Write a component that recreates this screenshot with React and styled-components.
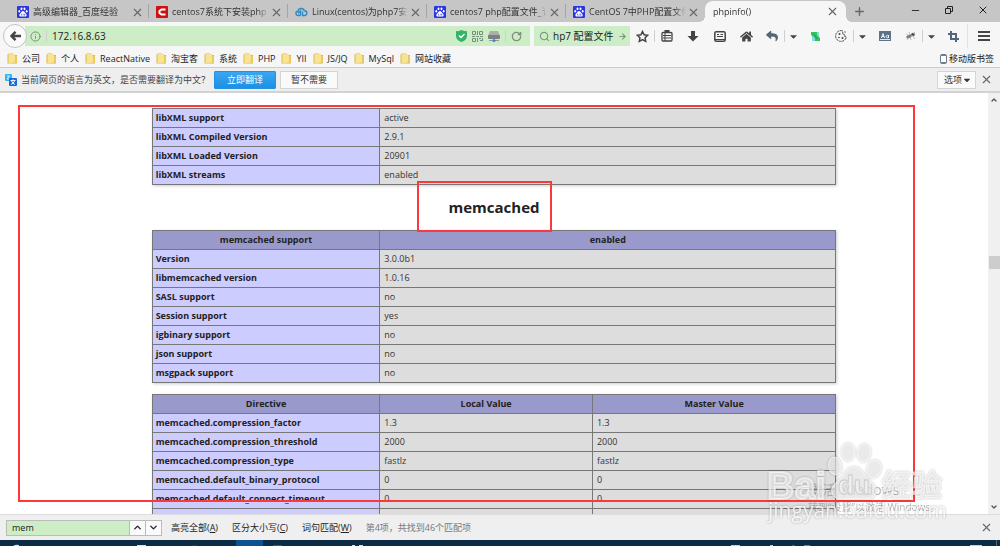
import React from 'react';
import styled, { createGlobalStyle, css } from 'styled-components';
import { ArrowRight, Info, Minus, Plus, RotateCw, Search, X, ChevronUp, ChevronDown } from 'lucide-react';
import { FaCaretDown, FaHome, FaReply } from 'react-icons/fa';

const GlobalStyle = createGlobalStyle`
  * {
    box-sizing: border-box;
  }

  body {
    margin: 0;
    background: #fff;
    color: #222;
    font-family: 'Open Sans', 'Noto Sans CJK SC', sans-serif;
    font-size: 9px;
    line-height: 12px;
  }

  button,
  input {
    margin: 0;
    padding: 0;
    border: 0;
    background: none;
    color: inherit;
    font: inherit;
  }

  svg {
    display: block;
    flex: none;
  }
`;

const Browser = styled.div`
  height: 100vh;
  display: flex;
  flex-direction: column;
  overflow: hidden;
`;

/* ---------- tabs ---------- */

const TabStrip = styled.header`
  flex: none;
  height: 22px;
  display: flex;
  padding-left: 10px;
  background: #c6c6c6;
`;

const Tab = styled.div`
  width: 139px;
  height: 22px;
  display: flex;
  align-items: center;
  gap: 4px;
  padding: 2px 5px 0 7px;
  position: relative;
  color: #333;

  ${({ $divider }) =>
    $divider &&
    css`
      background: linear-gradient(#a4a4a4, #a4a4a4) right 4px / 1px 14px no-repeat;
    `}

  ${({ $active }) =>
    $active &&
    css`
      width: 141px;
      height: 21px;
      margin: 1px 0 0;
      padding: 0 7px 0 8px;
      border-radius: 8px 8px 0 0;
      background: #f6f6f6;

      &::before,
      &::after {
        content: '';
        position: absolute;
        bottom: 0;
        width: 6px;
        height: 6px;
      }

      &::before {
        left: -6px;
        background: radial-gradient(circle at 0 0, transparent 6px, #f6f6f6 6px);
      }

      &::after {
        right: -6px;
        background: radial-gradient(circle at 100% 0, transparent 6px, #f6f6f6 6px);
      }
    `}
`;

const TabTitle = styled.span`
  flex: 1;
  min-width: 0;
  margin-right: -3px;
  overflow: hidden;
  white-space: nowrap;
  mask-image: linear-gradient(to right, #000 88%, transparent);
`;

const IconButton = styled.button`
  display: flex;
  align-items: center;
  justify-content: center;
  color: ${({ $color }) => $color || '#666'};
`;

const NewTab = styled(IconButton)`
  width: 26px;
`;

const WindowButtons = styled.div`
  margin-left: auto;
  display: flex;
  height: 20px;
`;

const WindowButton = styled(IconButton)`
  width: 34px;
`;

/* ---------- toolbar ---------- */

const Toolbar = styled.div`
  flex: none;
  height: 28px;
  display: flex;
  align-items: center;
  background: #f6f6f6;
`;

const BackButton = styled(IconButton)`
  width: 24px;
  height: 24px;
  margin: 0 -2px 0 3px;
  position: relative;
  border: 1px solid #c3c3c3;
  border-radius: 50%;
  background: #fafafa;
`;

const UrlBar = styled.div`
  flex: 1;
  height: 20px;
  display: flex;
  align-items: center;
  gap: 5px;
  padding: 0 8px 0 5px;
  background: #cdedc7;
`;

const UrlInput = styled.input`
  flex: 1;
  min-width: 0;
  font-size: 10px;
  outline: none;
`;

const SearchBox = styled.div`
  width: 96px;
  height: 20px;
  display: flex;
  align-items: center;
  gap: 3px;
  margin-left: 4px;
  padding: 0 3px 0 5px;
  background: #cdedc7;
  color: #7c9a7c;
`;

const SearchInput = styled.input`
  flex: 1;
  min-width: 0;
  color: #222;
  font-size: 10px;
  outline: none;
`;

const Divider = styled.span`
  width: 1px;
  height: ${({ $tall }) => ($tall ? '24px' : '12px')};
  background: ${({ $tall }) => ($tall ? '#e2e2e2' : '#cfcfcf')};
`;

const toolWidths = { wide: '32px', normal: '27px', narrow: '24px', caret: '17px' };

const ToolButton = styled(IconButton)`
  width: ${({ $size }) => toolWidths[$size || 'normal']};
  height: 24px;
`;

/* ---------- bookmarks and translate bar ---------- */

const Bookmarks = styled.nav`
  flex: none;
  height: 18px;
  display: flex;
  align-items: center;
  gap: 6px;
  padding: 0 6px 0 7px;
  border-bottom: 1px solid #cbcbcb;
  background: #f6f6f6;
`;

const Bookmark = styled.a`
  display: flex;
  align-items: center;
  gap: 4px;
  color: #222;
  text-decoration: none;
  white-space: nowrap;
`;

const MobileBookmarks = styled(Bookmark)`
  margin-left: auto;
  gap: 2px;
`;

const TranslateBar = styled.div`
  flex: none;
  height: 25px;
  display: flex;
  align-items: center;
  gap: 4px;
  padding: 0 7px 0 5px;
  border-bottom: 2px solid #d2d2d2;
  background: #eee;
`;

const TranslateText = styled.span`
  color: #444;
  white-space: nowrap;
`;

const BarButton = styled.button`
  height: 18px;
  padding: 0 10px;
  border: 1px solid #d5d5d5;
  background: #fafafa;
  color: #333;
  white-space: nowrap;

  ${({ $primary }) =>
    $primary &&
    css`
      padding: 0 12px;
      border-color: #2492e0;
      border-radius: 1px;
      background: linear-gradient(#3ba6f0, #1b90e6);
      color: #fff;
    `}
`;

const OptionsButton = styled(BarButton)`
  display: flex;
  align-items: center;
  margin-left: auto;
  padding: 0 3px 0 6px;
`;

/* ---------- page ---------- */

const Viewport = styled.main`
  flex: 1;
  min-height: 0;
  display: flex;
  position: relative;
`;

const Page = styled.div`
  flex: 1;
  overflow: hidden;
  padding-top: 15px;
`;

const InfoTable = styled.table`
  width: 69.3%;
  margin: 0 auto 11px;
  table-layout: fixed;
  border-collapse: collapse;
  box-shadow: 1px 1px 3px #ccc;
`;

const cell = css`
  height: 19px;
  padding: 0 4px;
  border: 1px solid #777;
  text-align: left;
`;

const HeadCell = styled.th`
  ${cell}
  background: #9999cc;
  text-align: center;
`;

const NameCell = styled.th`
  ${cell}
  padding-left: 3px;
  background: #ccccff;
`;

const ValueCell = styled.td`
  ${cell}
  background: #ddd;
  color: #333;
`;

const ModuleTitle = styled.h2`
  margin: 0;
  padding: 1px 0 13px;
  font-size: 15px;
  line-height: 20px;
  text-align: center;
`;

const Scrollbar = styled.div`
  width: 12px;
  display: flex;
  flex-direction: column;
  justify-content: space-between;
  align-items: center;
  padding: 3px 0;
  background: #f0f0f0;
  color: #555;
`;

const Thumb = styled.div`
  width: 11px;
  height: 13px;
  margin-bottom: 82px;
  background: #cdcdcd;
`;

const PageFrame = styled.div`
  position: absolute;
  top: 12px;
  right: 85px;
  bottom: 12px;
  left: 18px;
  border: 2px solid #fa3a3a;
  pointer-events: none;
`;

const TitleFrame = styled.div`
  position: absolute;
  top: 88px;
  left: calc(50% - 83px);
  width: 135px;
  height: 51px;
  border: 2px solid #fa3a3a;
  pointer-events: none;
`;

const Activation = styled.div`
  position: absolute;
  right: 48px;
  bottom: 0;
  width: 144px;
  color: #999;
  opacity: 0.7;
  font-size: 10px;
  line-height: 14px;
  white-space: nowrap;
`;

const ActivationTitle = styled.div`
  font-size: 14px;
  line-height: 20px;
`;

const Watermark = styled.svg`
  position: absolute;
  right: 46px;
  bottom: -10px;
  z-index: 2;
  filter: drop-shadow(0 0 1px rgba(0, 0, 0, 0.35));
  pointer-events: none;
`;

/* ---------- find bar and taskbar ---------- */

const FindBar = styled.footer`
  flex: none;
  height: 26px;
  display: flex;
  align-items: center;
  gap: 14px;
  padding: 0 7px 0 6px;
  border-top: 1px solid #ddd;
  background: #efefef;
`;

const FindField = styled.div`
  display: flex;
  height: 16px;
  margin-right: -5px;
  border: 1px solid #bbb;
`;

const FindInput = styled.input`
  width: 122px;
  padding-left: 5px;
  background: #cdedc7;
  outline: none;
`;

const FindStep = styled(IconButton)`
  width: 16px;
  border-left: 1px solid #bbb;
  background: #fafafa;
`;

const FindOption = styled.button`
  white-space: nowrap;
`;

const FindStatus = styled.span`
  color: #777;
`;

const FindClose = styled(IconButton)`
  margin-left: auto;
`;

const Taskbar = styled.div`
  flex: none;
  height: 6px;
  display: flex;
  justify-content: space-between;
  background: #0c2c45;
`;

/* ---------- drawings ---------- */

const Paw = ({ size = 12 }) => (
  <svg width={size} height={size} viewBox="0 0 12 12">
    <rect width="12" height="12" rx="1" fill="#2b36e0" />
    <g fill="#fff">
      <ellipse cx="4.5" cy="2.8" rx="1" ry="1.4" />
      <ellipse cx="7.5" cy="2.8" rx="1" ry="1.4" />
      <ellipse cx="2.3" cy="5.2" rx="0.9" ry="1.3" />
      <ellipse cx="9.7" cy="5.2" rx="0.9" ry="1.3" />
      <path d="M6 4.9c1.2 0 1.5 1.2 2.3 2 .9.8 1.5 1.5 1.3 2.5-.3 1.3-1.8 1.2-3.6 1.2S2.7 10.7 2.4 9.4c-.2-1 .4-1.7 1.3-2.5.8-.8 1.1-2 2.3-2z" />
    </g>
    <path d="M4.5 7.7v1.5h1M6.8 7.7v1.5h1V7.7" fill="none" stroke="#2b36e0" strokeWidth="0.6" />
  </svg>
);

const RedC = () => (
  <svg width="12" height="12" viewBox="0 0 12 12">
    <rect width="12" height="12" rx="1" fill="#cf1010" />
    <path d="M9.5 3.5H5.5L3.5 5v2l2 1.5h4" fill="none" stroke="#fff" strokeWidth="2" />
  </svg>
);

const Cloud = () => (
  <svg width="13" height="12" viewBox="0 0 13 12" fill="none" stroke="#2d8cc8" strokeWidth="1.4">
    <path d="M5.5 9.5H3.3C.2 9.5.2 5.5 3 5.3 3.3 1.8 8.5 1.5 9.3 4.8c3.4.2 3.4 4.7.2 4.7H7.5V5.5" />
    <path d="M3 7.5 5.5 5v4.5" />
  </svg>
);

const Restore = () => (
  <svg width="8" height="8" viewBox="0 0 8 8" fill="none" stroke="#222">
    <path d="M.5 2.5h5v5h-5zM2.5 2.5v-2h5v5h-2" />
  </svg>
);

const BackArrow = () => (
  <svg width="11" height="10" viewBox="0 0 11 10" fill="none" stroke="#444" strokeWidth="2.4">
    <path d="M5.5.8 1.5 5l4 4.2M1.5 5H11" />
  </svg>
);

const DownArrow = () => (
  <svg width="12" height="12" viewBox="0 0 12 12" fill="#444">
    <path d="M4 1h4v5h3.500L6 11.500.500 6H4z" />
  </svg>
);

const Shield = () => (
  <svg width="11" height="12" viewBox="0 0 11 12">
    <path d="M0 1q3 .5 5.500-1Q8 1.500 11 1v5q0 4-5.500 6Q0 10 0 6z" fill="#35b36b" />
    <path d="M3 5.5 5 7.5l3.500-3.500" fill="none" stroke="#fff" strokeWidth="1.3" />
  </svg>
);

const QrCode = () => (
  <svg width="11" height="11" viewBox="0 0 11 11" fill="none" stroke="#76917a">
    <path d="M.5.5h3v3h-3zM7.5.5h3v3h-3zM.5 7.5h3v3h-3zM5.5 0v4M0 5.5h3M4 5.5h3M8 5.5h3M5.5 7v4M7 7.5h2M8 9.5h3M10.5 7v2" />
  </svg>
);

const Drive = () => (
  <svg width="12" height="12" viewBox="0 0 12 12">
    <path d="M2 1h8l2 5H0z" fill="#a9b0aa" />
    <rect y="5" width="12" height="4" rx="1" fill="#7a807b" />
    <path d="M1 10.5h10" stroke="#999" />
    <circle cx="6" cy="10.5" r="1.5" fill="#3f7fe0" />
  </svg>
);

const StarOutline = () => (
  <svg width="13" height="13" viewBox="0 0 13 13" fill="none" stroke="#444" strokeWidth="1.5">
    <path d="m6.5 1.5 1.6 3.3 3.6.5-2.6 2.5.6 3.6-3.2-1.7-3.2 1.7.6-3.6L1.3 5.3l3.6-.5z" />
  </svg>
);

const Clipboard = () => (
  <svg width="12" height="12" viewBox="0 0 12 12" fill="none" stroke="#444">
    <rect x="1" y="2.5" width="10" height="8.5" rx="1" strokeWidth="1.3" />
    <path d="M3.5 1h5" strokeWidth="2" />
    <path d="M4 3v8M2 5.5h8M2 8h8" />
  </svg>
);

const Reader = () => (
  <svg width="12" height="11" viewBox="0 0 12 11" fill="none" stroke="#444">
    <rect x=".8" y=".8" width="10.4" height="9.4" rx="1.5" strokeWidth="1.5" />
    <path d="M3 3.500h2M6.500 3.500h2.500M3 5.500h6M1 8.500h10" />
  </svg>
);

const Sync = () => (
  <svg width="9" height="11" viewBox="0 0 9 11">
    <path d="M1 1h7v9H1z" fill="#7fdfe6" />
    <path d="M0 1h6v3l3 3v3H4V7L0 4z" fill="#35c05b" />
    <path d="M3 3 6 8" stroke="#22a055" />
  </svg>
);

const Cookie = () => (
  <svg width="12" height="12" viewBox="0 0 12 12">
    <path d="M7.5.8A5.4 5.4 0 1 0 11.3 7L9.5 6.5 10 5 8 4.5z" fill="none" stroke="#555" strokeDasharray="2.5 .6" />
    <g fill="#444">
      <circle cx="4.5" cy="4" r="1" />
      <circle cx="4" cy="7.5" r=".8" />
      <circle cx="7.5" cy="8" r="1" />
      <circle cx="10" cy="2" r=".7" />
    </g>
  </svg>
);

const Dictionary = () => (
  <svg width="12" height="10" viewBox="0 0 12 10">
    <rect width="12" height="10" fill="#5f7388" />
    <path d="M1 8.5h10" stroke="#dfe5ea" />
    <path d="M2.5 7 4 2.5 5.5 7M3 5.5h2M9.5 4v3M9.5 5.5a1.2 1.2 0 1 0 0 .1" fill="none" stroke="#fff" strokeWidth=".9" />
  </svg>
);

const Bug = () => (
  <svg width="11" height="10" viewBox="0 0 11 10">
    <ellipse cx="4" cy="5.5" rx="2.8" ry="1.7" fill="#777" transform="rotate(-20 4 5.5)" />
    <circle cx="8" cy="3.5" r="1.8" fill="#555" />
    <path d="M1 2.5 4 5 2 9M5 5l1 4M7 4l3 4M5 4 4 1M8 3l2-2" fill="none" stroke="#999" strokeWidth=".6" />
  </svg>
);

const CropIcon = () => (
  <svg width="11" height="11" viewBox="0 0 11 11" fill="none" stroke="#536577" strokeWidth="2">
    <path d="M3 0v8h8M0 3h8v8" />
  </svg>
);

const MenuIcon = () => (
  <svg width="12" height="10" viewBox="0 0 12 10" fill="none" stroke="#444" strokeWidth="2">
    <path d="M0 1h12M0 5h12M0 9h12" />
  </svg>
);

const Folder = () => (
  <svg width="11" height="11" viewBox="0 0 11 11">
    <path d="M.5 1.5 2 .5h4l1 1.500h3v8.500H.5z" fill="#dcb84e" />
    <path d="M1.5 1h6.500v8.500l-6.500 1z" fill="#f7e394" />
    <path d="M8 3h2v7H8z" fill="#ecc860" />
  </svg>
);

const Phone = () => (
  <svg width="7" height="10" viewBox="0 0 7 10">
    <rect x=".5" y=".5" width="6" height="9" rx="1" fill="#fff" stroke="#6b7c8c" />
    <path d="M1 1.5h5M1 8.5h5" stroke="#6b7c8c" />
  </svg>
);

const Translate = () => (
  <svg width="12" height="12" viewBox="0 0 12 12">
    <rect width="7" height="7" rx="1" fill="#36b4ec" />
    <path d="M2 2h2.500L2 5h3" fill="none" stroke="#fff" strokeWidth=".8" />
    <rect x="4" y="4" width="8" height="8" rx="1" fill="#1769e0" />
    <path d="M5.5 6.5h5M8 5.3v1.2M6.5 7q1 2.500 3.500 3.500M9.500 7q-1 2.500-3.500 3.500" fill="none" stroke="#fff" strokeWidth=".9" />
  </svg>
);

const BaiduWatermark = () => (
  <Watermark width="188" height="90" viewBox="0 0 188 90">
    <g fill="#fff" fillOpacity="0.6" stroke="#fff" strokeOpacity="0.6">
      <ellipse cx="82" cy="18" rx="6.5" ry="9" />
      <ellipse cx="98" cy="19" rx="6.5" ry="9" transform="rotate(10 98 19)" />
      <ellipse cx="69" cy="32" rx="6.5" ry="9" transform="rotate(-12 69 32)" />
      <ellipse cx="108" cy="35" rx="7" ry="9" transform="rotate(20 108 35)" />
      <path d="M88 33c8 0 9 7 14 12 5 4 10 9 8 14-2 8-11 6-22 6s-20 2-22-6c-2-5 3-10 8-14 5-5 6-12 14-12z" />
      <text x="1" y="65" fontSize="38" fontWeight="700" strokeWidth="2" fontFamily="Liberation Sans, sans-serif">Bai</text>
      <text x="116" y="62" fontSize="30" fontWeight="700" fontFamily="Noto Sans CJK SC, sans-serif">经验</text>
      <text x="2" y="84" fontSize="21" strokeWidth="0" fillOpacity="0.8" fontFamily="Open Sans, sans-serif">jingyan.baidu.com</text>
    </g>
    <text x="72" y="60" fontSize="26" fontWeight="700" fontFamily="Liberation Sans, sans-serif" fill="#eee" stroke="#ccc" strokeWidth="0.8">du</text>
  </Watermark>
);

const TaskIcons = () => (
  <svg width="380" height="6" viewBox="0 0 380 6">
    <path d="M236 0h27v6h-27z" fill="#0b5292" />
    <path d="M13 6q3-2 6-1v1zM137 5h9v1h-9zM352 5h3v1h-3zM359 5h4v1h-4z" fill="#d9e2e8" />
    <path d="M192 5h5v1h-5z" fill="#5c2630" />
    <path d="M273 5h9v1h-9z" fill="#0d7382" />
  </svg>
);

const TrayIcons = () => (
  <svg width="272" height="6" viewBox="0 0 272 6">
    <path d="M3 5h9v1H3zM42 5h3v1h-3zM242 5h12v1h-12z" fill="#c5d0d8" />
    <path d="M20 5h11v1H20z" fill="#1a1b9c" />
    <path d="M64 5h3v1h-3z" fill="#b33" />
    <path d="M76 5h6v1h-6z" fill="#6c9b37" />
    <path d="M268.5 0v6" stroke="#50687a" />
  </svg>
);

/* ---------- content ---------- */

const tabs = [
  { title: '高级编辑器_百度经验', icon: <Paw /> },
  { title: 'centos7系统下安装php', icon: <RedC /> },
  { title: 'Linux(centos)为php7安', icon: <Cloud /> },
  { title: 'centos7 php配置文件_讠', icon: <Paw /> },
  { title: 'CentOS 7中PHP配置文件', icon: <Paw /> },
];

const bookmarks = ['公司', '个人', 'ReactNative', '淘宝客', '系统', 'PHP', 'YII', 'JS/JQ', 'MySql', '网站收藏'];

const libxml = [
  ['libXML support', 'active'],
  ['libXML Compiled Version', '2.9.1'],
  ['libXML Loaded Version', '20901'],
  ['libXML streams', 'enabled'],
];

const memcached = [
  ['Version', '3.0.0b1'],
  ['libmemcached version', '1.0.16'],
  ['SASL support', 'no'],
  ['Session support', 'yes'],
  ['igbinary support', 'no'],
  ['json support', 'no'],
  ['msgpack support', 'no'],
];

const directives = [
  ['memcached.compression_factor', '1.3', '1.3'],
  ['memcached.compression_threshold', '2000', '2000'],
  ['memcached.compression_type', 'fastlz', 'fastlz'],
  ['memcached.default_binary_protocol', '0', '0'],
  ['memcached.default_connect_timeout', '0', '0'],
  ['', '', ''],
];

const PhpTable = ({ head, rows, widths }) => (
  <InfoTable>
    <colgroup>
      {widths.map((width, i) => (
        <col key={i} width={width} />
      ))}
    </colgroup>
    {head && (
      <thead>
        <tr>
          {head.map((title) => (
            <HeadCell key={title} scope="col">{title}</HeadCell>
          ))}
        </tr>
      </thead>
    )}
    <tbody>
      {rows.map(([name, ...values]) => (
        <tr key={name}>
          <NameCell scope="row">{name}</NameCell>
          {values.map((value, i) => (
            <ValueCell key={i}>{value}</ValueCell>
          ))}
        </tr>
      ))}
    </tbody>
  </InfoTable>
);

const CloseIcon = () => <X size={13} strokeWidth={2} />;

const App = () => (
  <Browser>
    <GlobalStyle />
    <TabStrip>
      {tabs.map((tab, i) => (
        <Tab key={tab.title} $divider={i < tabs.length - 1}>
          {tab.icon}
          <TabTitle>{tab.title}</TabTitle>
          <IconButton aria-label="关闭标签页"><CloseIcon /></IconButton>
        </Tab>
      ))}
      <Tab $active>
        <TabTitle>phpinfo()</TabTitle>
        <IconButton aria-label="关闭标签页"><CloseIcon /></IconButton>
      </Tab>
      <NewTab aria-label="新标签页"><Plus size={13} strokeWidth={2.5} /></NewTab>
      <WindowButtons>
        <WindowButton aria-label="最小化" $color="#222"><Minus size={11} /></WindowButton>
        <WindowButton aria-label="还原"><Restore /></WindowButton>
        <WindowButton aria-label="关闭" $color="#222"><X size={12} /></WindowButton>
      </WindowButtons>
    </TabStrip>

    <Toolbar>
      <BackButton aria-label="后退"><BackArrow /></BackButton>
      <UrlBar>
        <Info size={11} color="#6f8a70" />
        <Divider />
        <UrlInput aria-label="地址" defaultValue="172.16.8.63" />
        <Shield />
        <QrCode />
        <Drive />
        <Divider />
        <IconButton aria-label="刷新" $color="#7c8f7c"><RotateCw size={11} strokeWidth={3} /></IconButton>
      </UrlBar>
      <SearchBox>
        <Search size={11} strokeWidth={2.5} />
        <SearchInput aria-label="搜索" defaultValue="hp7 配置文件" />
        <ArrowRight size={9} strokeWidth={3} />
      </SearchBox>
      <ToolButton $size="narrow" aria-label="收藏"><StarOutline /></ToolButton>
      <Divider />
      <ToolButton $size="narrow" aria-label="书签"><Clipboard /></ToolButton>
      <ToolButton aria-label="下载"><DownArrow /></ToolButton>
      <ToolButton aria-label="阅读"><Reader /></ToolButton>
      <ToolButton aria-label="主页" $color="#444"><FaHome size={13} /></ToolButton>
      <ToolButton $size="narrow" aria-label="撤销" $color="#536577"><FaReply size={12} /></ToolButton>
      <Divider />
      <ToolButton $size="caret" aria-label="撤销列表" $color="#444"><FaCaretDown size={11} /></ToolButton>
      <ToolButton aria-label="同步"><Sync /></ToolButton>
      <ToolButton $size="narrow" aria-label="Cookie"><Cookie /></ToolButton>
      <Divider />
      <ToolButton $size="caret" aria-label="Cookie 列表" $color="#444"><FaCaretDown size={11} /></ToolButton>
      <ToolButton aria-label="词典"><Dictionary /></ToolButton>
      <ToolButton $size="narrow" aria-label="调试"><Bug /></ToolButton>
      <Divider />
      <ToolButton $size="caret" aria-label="调试列表" $color="#444"><FaCaretDown size={11} /></ToolButton>
      <ToolButton aria-label="截图"><CropIcon /></ToolButton>
      <Divider $tall />
      <ToolButton $size="wide" aria-label="菜单"><MenuIcon /></ToolButton>
    </Toolbar>

    <Bookmarks>
      {bookmarks.map((name) => (
        <Bookmark key={name} href="#"><Folder />{name}</Bookmark>
      ))}
      <MobileBookmarks href="#"><Phone />移动版书签</MobileBookmarks>
    </Bookmarks>

    <TranslateBar>
      <Translate />
      <TranslateText>当前网页的语言为英文，是否需要翻译为中文？</TranslateText>
      <BarButton $primary>立即翻译</BarButton>
      <BarButton>暂不需要</BarButton>
      <OptionsButton>选项<FaCaretDown size={10} /></OptionsButton>
      <IconButton aria-label="关闭"><CloseIcon /></IconButton>
    </TranslateBar>

    <Viewport>
      <Page>
        <PhpTable rows={libxml} widths={['33.3%', '66.7%']} />
        <ModuleTitle>memcached</ModuleTitle>
        <PhpTable head={['memcached support', 'enabled']} rows={memcached} widths={['33.3%', '66.7%']} />
        <PhpTable
          head={['Directive', 'Local Value', 'Master Value']}
          rows={directives}
          widths={['33.3%', '31.1%', '35.6%']}
        />
      </Page>
      <Scrollbar>
        <ChevronUp size={8} strokeWidth={4} />
        <Thumb />
        <ChevronDown size={8} strokeWidth={4} />
      </Scrollbar>
      <Activation>
        <ActivationTitle>激活 Windows</ActivationTitle>
        转到“设置”以激活 Windows。
      </Activation>
      <PageFrame />
      <TitleFrame />
      <BaiduWatermark />
    </Viewport>

    <FindBar>
      <FindField>
        <FindInput aria-label="查找" defaultValue="mem" />
        <FindStep aria-label="上一个" $color="#222"><ChevronUp size={11} strokeWidth={3} /></FindStep>
        <FindStep aria-label="下一个" $color="#222"><ChevronDown size={11} strokeWidth={3} /></FindStep>
      </FindField>
      <FindOption>高亮全部(<u>A</u>)</FindOption>
      <FindOption>区分大小写(<u>C</u>)</FindOption>
      <FindOption>词句匹配(<u>W</u>)</FindOption>
      <FindStatus>第4项，共找到46个匹配项</FindStatus>
      <FindClose aria-label="关闭查找栏"><CloseIcon /></FindClose>
    </FindBar>

    <Taskbar>
      <TaskIcons />
      <TrayIcons />
    </Taskbar>
  </Browser>
);

export default App;
